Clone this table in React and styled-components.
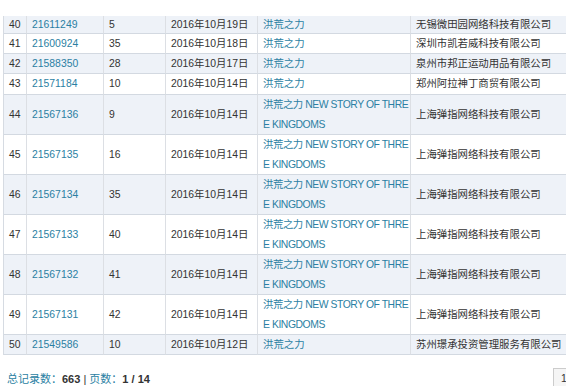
import React from "react";
import styled, { createGlobalStyle } from "styled-components";

const Global = createGlobalStyle`
  html, body { margin: 0; padding: 0; background: #fff; overflow: hidden; }
  body { font-family: "Liberation Sans", "Noto Sans CJK SC", Arial, sans-serif; font-size: 10.4px; color: #333; }
`;

const Page = styled.div`
  width: 634px;
  padding: 16px 0 0 3px;
`;

const Table = styled.div`
  display: grid;
  grid-template-columns: 23px 77px 62px 92px 153px 230px;
  border-left: 1px solid #d6dbe2;
`;

const Row = styled.div`
  display: contents;
  & > div {
    background: ${(p) => (p.$shade ? "#eef2f8" : "#ffffff")};
    height: ${(p) => p.$h}px;
  }
`;

const Cell = styled.div`
  display: flex;
  align-items: center;
  padding: 0 5px;
  border-right: 1px solid #dcdfe4;
  border-bottom: 1px solid #d3d9e1;
  line-height: 20px;
  white-space: pre;
  letter-spacing: ${(p) => (p.$tight ? "-0.45px" : "0")};
  color: ${(p) => (p.$link ? "#2b7fa3" : "#333")};
  overflow: hidden;
`;

const Footer = styled.div`
  display: flex;
  align-items: center;
  margin-top: 13px;
  height: 20px;
`;

const Summary = styled.div`
  flex: 1;
  padding-left: 4px;
  font-size: 11px;
  color: #2b7fa3;
  b { color: #333; font-weight: bold; }
  span { color: #333; }
`;

const Pager = styled.div`
  display: flex;
  gap: 20px;
  width: 84px;
`;

const PageBtn = styled.div`
  height: 19px;
  min-width: 20px;
  border: 1px solid #ccc;
  background: #f5f5f5;
  display: flex;
  align-items: center;
  justify-content: center;
  color: #333;
`;

const long = "洪荒之力 NEW STORY OF THRE\nE KINGDOMS";

const rows = [
  ["40", "21611249", "5", "2016年10月19日", "洪荒之力", "无锡微田园网络科技有限公司", 17],
  ["41", "21600924", "35", "2016年10月18日", "洪荒之力", "深圳市凯若威科技有限公司", 19],
  ["42", "21588350", "28", "2016年10月17日", "洪荒之力", "泉州市邦正运动用品有限公司", 19],
  ["43", "21571184", "10", "2016年10月14日", "洪荒之力", "郑州阿拉神丁商贸有限公司", 20],
  ["44", "21567136", "9", "2016年10月14日", long, "上海弹指网络科技有限公司", 39],
  ["45", "21567135", "16", "2016年10月14日", long, "上海弹指网络科技有限公司", 39],
  ["46", "21567134", "35", "2016年10月14日", long, "上海弹指网络科技有限公司", 39],
  ["47", "21567133", "40", "2016年10月14日", long, "上海弹指网络科技有限公司", 39],
  ["48", "21567132", "41", "2016年10月14日", long, "上海弹指网络科技有限公司", 39],
  ["49", "21567131", "42", "2016年10月14日", long, "上海弹指网络科技有限公司", 39],
  ["50", "21549586", "10", "2016年10月12日", "洪荒之力", "苏州璟承投资管理服务有限公司", 19],
];

export default function App() {
  return (
    <Page>
      <Global />
      <Table>
        {rows.map((r, i) => (
          <Row key={r[0]} $shade={i % 2 === 0} $h={r[6]}>
            <Cell>{r[0]}</Cell>
            <Cell $link>{r[1]}</Cell>
            <Cell>{r[2]}</Cell>
            <Cell>{r[3]}</Cell>
            <Cell $link $tight={r[4] === long}>{r[4]}</Cell>
            <Cell>{r[5]}</Cell>
          </Row>
        ))}
      </Table>
      <Footer>
        <Summary>
          总记录数：<b>663</b> <span>|</span> 页数：<b>1 / 14</b>
        </Summary>
        <Pager>
          <PageBtn>1</PageBtn>
          <PageBtn>2</PageBtn>
        </Pager>
      </Footer>
    </Page>
  );
}
